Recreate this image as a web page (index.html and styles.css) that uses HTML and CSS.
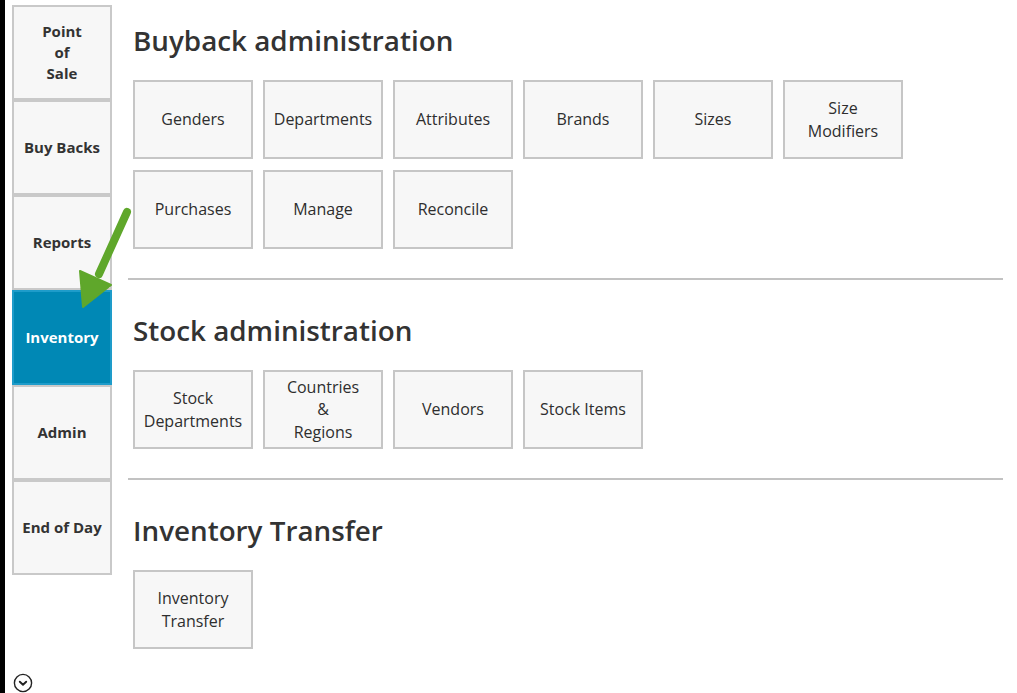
FILE: index.html
```html
<!DOCTYPE html>
<html lang="en">
<head>
    <meta charset="UTF-8">
    <title>Inventory</title>
    <link rel="stylesheet" href="styles.css">
</head>
<body>
    <div class="edge"></div>

    <nav class="sidebar">
        <a class="tile" href="#">Point<br>of<br>Sale</a>
        <a class="tile" href="#">Buy Backs</a>
        <a class="tile" href="#">Reports</a>
        <a class="tile active" href="#">Inventory</a>
        <a class="tile" href="#">Admin</a>
        <a class="tile" href="#">End of Day</a>
        <div class="more">
            <svg width="20" height="20" viewBox="0 0 20 20">
                <circle cx="10" cy="10" r="8.6" fill="none" stroke="#222" stroke-width="1.4"/>
                <path d="M6.8 8.7 L10 11.7 L13.2 8.7" fill="none" stroke="#222" stroke-width="1.9" stroke-linecap="round" stroke-linejoin="round"/>
            </svg>
        </div>
    </nav>

    <main class="content">
        <section class="section first">
            <h2>Buyback administration</h2>
            <div class="buttons">
                <a class="btn" href="#">Genders</a>
                <a class="btn" href="#">Departments</a>
                <a class="btn" href="#">Attributes</a>
                <a class="btn" href="#">Brands</a>
                <a class="btn" href="#">Sizes</a>
                <a class="btn" href="#">Size<br>Modifiers</a>
                <a class="btn" href="#">Purchases</a>
                <a class="btn" href="#">Manage</a>
                <a class="btn" href="#">Reconcile</a>
            </div>
        </section>

        <section class="section">
            <h2>Stock administration</h2>
            <div class="buttons">
                <a class="btn" href="#">Stock<br>Departments</a>
                <a class="btn" href="#">Countries<br>&amp;<br>Regions</a>
                <a class="btn" href="#">Vendors</a>
                <a class="btn" href="#">Stock Items</a>
            </div>
        </section>

        <section class="section last">
            <h2>Inventory Transfer</h2>
            <div class="buttons">
                <a class="btn" href="#">Inventory<br>Transfer</a>
            </div>
        </section>
    </main>

    <!-- callout arrow pointing at the Inventory tile -->
    <svg class="callout" width="140" height="320" viewBox="0 0 140 320">
        <line x1="127" y1="212" x2="99" y2="274" stroke="#5fa72b" stroke-width="8" stroke-linecap="round"/>
        <polygon points="80,271 111,285 83,307" fill="#5fa72b" stroke="#5fa72b" stroke-width="2" stroke-linejoin="round"/>
    </svg>
</body>
</html>
```

FILE: styles.css
```css
html, body {
    margin: 0;
    padding: 0;
    background-color: #fff;
}
body {
    display: flex;
    height: 693px;
    overflow: hidden;
    font-family: "Open Sans", "Noto Sans", sans-serif;
    color: #333;
    position: relative;
}
.edge {
    width: 5px;
    flex-shrink: 0;
    background-color: #000;
}
.sidebar {
    width: 100px;
    flex-shrink: 0;
    margin-left: 7px;
    padding-top: 5px;
    display: flex;
    flex-direction: column;
}
.tile {
    height: 95px;
    box-sizing: border-box;
    display: flex;
    align-items: center;
    justify-content: center;
    text-align: center;
    background-color: #f7f7f7;
    border: 2px solid #c9c9c9;
    color: #333;
    text-decoration: none;
    font-weight: bold;
    font-size: 15px;
    line-height: 21px;
}
.tile.active {
    background-color: #0088b5;
    border-color: #1e9cca;
    color: #fff;
}
.more {
    margin-top: auto;
    margin-bottom: 0;
    margin-left: 1px;
    height: 20px;
}
.content {
    width: 875px;
    margin-left: 16px;
    flex-shrink: 0;
}
.section {
    padding: 30px 0 29px 5px;
    border-bottom: 2px solid #c2c2c2;
}
.section.first {
    padding-top: 20px;
}
.section.last {
    border-bottom: none;
}
.section h2 {
    margin: 0 0 20px 0;
    font-size: 27.8px;
    line-height: 40px;
    font-weight: 600;
    color: #333;
}
.buttons {
    display: flex;
    flex-wrap: wrap;
    gap: 11px 10px;
    width: 780px;
}
.btn {
    width: 120px;
    height: 79px;
    box-sizing: border-box;
    display: flex;
    align-items: center;
    justify-content: center;
    text-align: center;
    background-color: #f7f7f7;
    border: 2px solid #c6c6c6;
    color: #2e2e2e;
    text-decoration: none;
    font-size: 16px;
    line-height: 22.5px;
}
.callout {
    position: absolute;
    left: 0;
    top: 0;
    pointer-events: none;
}
```
